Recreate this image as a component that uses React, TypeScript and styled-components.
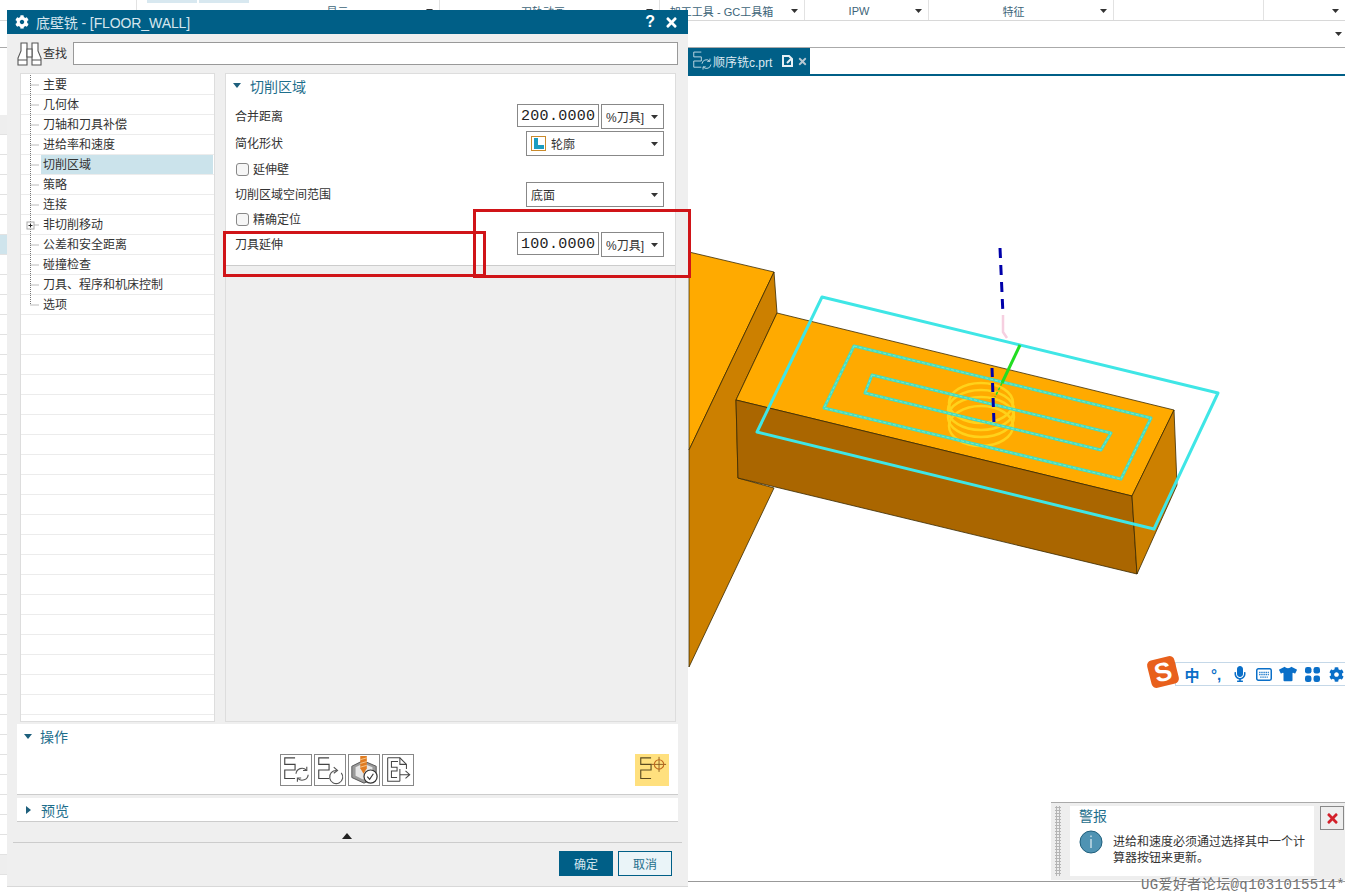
import styled, { createGlobalStyle } from "styled-components";
import { FaCog, FaMicrophone, FaTimes, FaTshirt } from "react-icons/fa";

const TEAL = "#005f87";
const CJK = `"Liberation Sans", "Noto Sans CJK SC", sans-serif`;

const GlobalStyle = createGlobalStyle`
  html, body {
    margin: 0;
    padding: 0;
    background: #fff;
  }
  body {
    font-family: ${CJK};
    font-size: 12px;
    color: #333;
  }
`;

const treeItems = [
  "主要",
  "几何体",
  "刀轴和刀具补偿",
  "进给率和速度",
  "切削区域",
  "策略",
  "连接",
  "非切削移动",
  "公差和安全距离",
  "碰撞检查",
  "刀具、程序和机床控制",
  "选项",
];

const ribbonSections = [
  { width: 137 },
  { width: 303, label: "显示", arrow: true, stubs: true },
  { width: 220, label: "刀轨动画", arrow: true },
  { width: 145, label: "加工工具 - GC工具箱", arrow: true, pad: 8 },
  { width: 124, label: "IPW", arrow: true, pad: 2 },
  { width: 185, label: "特征", arrow: true, pad: 2 },
  { width: 150 },
  { width: 81, arrow: true },
];

const SmallArrow = () => (
  <svg width="7" height="4" viewBox="0 0 7 4">
    <path d="M0 0h7L3.500 4z" fill="#333" />
  </svg>
);

const SeqGlyph = ({ color = "#444" }: { color?: string }) => (
  <path d="M15 3H4V10H15V16H4V25H15" fill="none" stroke={color} strokeWidth="1.2" />
);

const SyncArrows = ({ color = "#555" }: { color?: string }) => (
  <g fill="none" stroke={color} strokeWidth="1.2">
    <path d="M16 20a6.500 6.500 0 0 1 11-4" />
    <path d="M27.500 12.500v4h-4" />
    <path d="M29 21a6.500 6.500 0 0 1-11 4" />
    <path d="M17.500 28.500v-4h4" />
  </g>
);

const ToolbarIcon = ({ kind }: { kind: string }) => (
  <svg width="30" height="30" viewBox="0 0 32 32">
    {kind === "sync" && (
      <>
        <SeqGlyph />
        <SyncArrows />
      </>
    )}
    {kind === "replay" && (
      <>
        <SeqGlyph />
        <g fill="none" stroke="#555" strokeWidth="1.2">
          <path d="M28 19a7 7 0 1 1-5-2.500" />
          <path d="M20 13l4 3.500-4 3" />
        </g>
      </>
    )}
    {kind === "verify" && (
      <>
        <path d="M3 12L15 6l14 6v12l-13 6-13-6z" fill="#9a9a9a" stroke="#555" />
        <path d="M7 13l8-4 10 4v9l-10 4-8-4z" fill="#e6e6e6" />
        <path d="M12 1h7v13l-3.500 6L12 14z" fill="#e07b20" />
        <path d="M12 5l7-2M12 9l7-2M12 13l7-2" stroke="#f4c890" strokeWidth="1" />
        <circle cx="23" cy="23" r="7" fill="#fff" stroke="#333" strokeWidth="1.3" />
        <path d="M19.500 23l2.500 3 4-6" fill="none" stroke="#333" strokeWidth="1.2" />
      </>
    )}
    {kind === "export" && (
      <g fill="none" stroke="#444" strokeWidth="1.1">
        <path d="M5 3h13l7 7v5M5 3v25h13" />
        <path d="M18 3v7h7" />
        <path d="M16 7H9v6h6v4H9v7h6" />
        <path d="M18 21h10M24 17l4.500 4-4.500 4" />
        <path d="M18 15v13" />
      </g>
    )}
    {kind === "target" && (
      <>
        <SeqGlyph color="#5a4a20" />
        <path d="M15 10h16M23.500 2v16" stroke="#8a5a20" strokeWidth="1" />
        <circle cx="23.500" cy="10" r="5" fill="none" stroke="#c06a20" strokeWidth="1.2" />
      </>
    )}
  </svg>
);

const TreeConnector = ({ last, plus }: { last: boolean; plus: boolean }) => (
  <svg width="20" height="20" viewBox="0 0 20 20">
    <path
      d={last ? "M9.500 0V10M9.500 10H18" : "M9.500 0V20M9.500 10H18"}
      stroke="#777"
      strokeDasharray="1 1"
      fill="none"
    />
    {plus && (
      <>
        <rect x="6" y="7" width="7" height="7" fill="#fff" stroke="#aaa" />
        <path d="M7.500 10.500h4M9.500 8.500v4" stroke="#222" />
      </>
    )}
  </svg>
);

const Binoculars = () => (
  <svg width="25" height="24" viewBox="0 0 25 24">
    <g fill="#fff" stroke="#555" strokeWidth="1.1">
      <path d="M1 23v-7l3-7V1h6v22z" />
      <path d="M24 23v-7l-3-7V1h-6v22z" />
      <path d="M10 7h5v8h-5z" />
      <path d="M1 18h9M15 18h9" />
    </g>
  </svg>
);

const ContourIcon = () => (
  <svg width="15" height="15" viewBox="0 0 15 15">
    <rect x="0.500" y="0.500" width="14" height="14" fill="#fff" stroke="#c98a2c" />
    <path d="M3 2h4v7h6v4H3z" fill="#1b9cc0" />
  </svg>
);

const Scene = () => (
  <svg width="657" height="805" viewBox="688 76 657 805">
    <g stroke="#3a2a00" strokeWidth="0.8" strokeLinejoin="round">
      <path d="M689 252L774 272L689 450z" fill="#ffaa00" />
      <path d="M774 272L777 313L736 400L738 478L774 488L689 667V450z" fill="#cc8000" />
      <path d="M777 313L1174 410L1132 496L736 400z" fill="#ffaa00" />
      <path d="M736 400L1132 496L1137 574L738 478z" fill="#aa6600" />
      <path d="M1174 410L1177 485L1137 574L1132 496z" fill="#cc8000" />
    </g>
    <g fill="none" stroke="#ffd21a" strokeWidth="2.500">
      <ellipse cx="981" cy="403" rx="32" ry="20" />
      <ellipse cx="981" cy="410" rx="33" ry="20" />
      <ellipse cx="981" cy="417" rx="33" ry="20" />
      <ellipse cx="981" cy="426" rx="32" ry="20" />
    </g>
    <g fill="none" strokeLinejoin="round">
      <path d="M822 297L1218 393L1154 529L757 432z" stroke="#3fe6e6" strokeWidth="3" />
      <path d="M854 346L1151 418L1121 479L824 408z" stroke="#45dcc0" strokeWidth="3" />
      <path d="M872 375L1111 433L1101 450L865 393z" stroke="#45dcc0" strokeWidth="3" />
      <path d="M854 346L1151 418L1121 479L824 408z" stroke="#9ff0c8" strokeWidth="0.6" strokeDasharray="3 2" />
      <path d="M872 375L1111 433L1101 450L865 393z" stroke="#9ff0c8" strokeWidth="0.6" strokeDasharray="3 2" />
    </g>
    <path d="M1000 248L1003 315" stroke="#0000aa" strokeWidth="3" strokeDasharray="10 7" />
    <path d="M1003 315V332L1007 338" stroke="#f6cfe0" strokeWidth="2.500" fill="none" />
    <path d="M1020 345L1002 383" stroke="#22dd22" strokeWidth="3" />
    <path d="M1002 383L995 397" stroke="#22dd22" strokeWidth="1.500" strokeDasharray="3 2" />
    <path d="M992 368L994 424" stroke="#0000aa" strokeWidth="3" strokeDasharray="9 6" />
  </svg>
);

export default function App() {
  return (
    <Page>
      <GlobalStyle />

      <Ribbon>
        {ribbonSections.map((s, i) => (
          <RibbonSection key={i} $width={s.width}>
            {s.stubs && <RibbonStubs />}
            <RibbonLabel $pad={s.pad ?? 0}>{s.label}</RibbonLabel>
            {s.arrow && <SmallArrow />}
          </RibbonSection>
        ))}
      </Ribbon>
      <SubRibbon>
        <SmallArrow />
      </SubRibbon>

      <Main>
        <LeftPane>
          <StripSpacer />
          <StripRow $kind="gray" />
          {Array.from({ length: 5 }).map((_, i) => (
            <StripRow key={i} $kind="plain" />
          ))}
          <StripRow $kind="blue" />
          {Array.from({ length: 30 }).map((_, i) => (
            <StripRow key={i} $kind="plain" />
          ))}
          <StripRow $kind="gray" />
        </LeftPane>

        <Workspace>
          <TabBar>
            <Tab>
              <svg width="22" height="22" viewBox="0 0 32 32">
                <SeqGlyph color="#dceaf2" />
                <SyncArrows color="#dceaf2" />
              </svg>
              <TabName>顺序铣c.prt</TabName>
              <svg width="12" height="12" viewBox="0 0 12 12">
                <path d="M1 1h6l3 3v7H1z" fill="none" stroke="#e6f0f5" strokeWidth="2" />
                <path d="M5 8l4-4" stroke="#e6f0f5" strokeWidth="2" />
              </svg>
              <TabClose>
                <FaTimes size={11} color="#b6c8d2" />
              </TabClose>
            </Tab>
          </TabBar>

          <Viewport>
            <Scene />
            <StatusLine />

            <Sogou>
              <SogouLogo>S</SogouLogo>
              <SogouBar>
                <SogouItem $bold>中</SogouItem>
                <SogouItem $bold>°,</SogouItem>
                <SogouItem>
                  <FaMicrophone size={16} />
                </SogouItem>
                <SogouItem>
                  <svg width="16" height="13" viewBox="0 0 15 12">
                    <rect x="0.700" y="0.700" width="13.600" height="10.600" rx="1.500" fill="none" stroke="currentColor" strokeWidth="1.400" />
                    <path d="M3 4h9M3 6h9M4 8.500h7" stroke="currentColor" strokeWidth="1.200" strokeDasharray="1.200 0.800" />
                  </svg>
                </SogouItem>
                <SogouItem>
                  <FaTshirt size={18} />
                </SogouItem>
                <SogouItem>
                  <svg width="15" height="15" viewBox="0 0 13 13" fill="currentColor">
                    <rect x="0" y="0" width="5.600" height="5.600" rx="2" />
                    <rect x="7.400" y="0" width="5.600" height="5.600" rx="2" />
                    <rect x="0" y="7.400" width="5.600" height="5.600" rx="2" />
                    <rect x="7.400" y="7.400" width="5.600" height="5.600" rx="2" />
                  </svg>
                </SogouItem>
                <SogouItem>
                  <FaCog size={15} />
                </SogouItem>
              </SogouBar>
            </Sogou>

            <AlertPanel>
              <AlertGrip />
              <AlertCard>
                <AlertTitle>警报</AlertTitle>
                <AlertBody>
                  <svg width="24" height="24" viewBox="0 0 24 24">
                    <circle cx="12" cy="12" r="11" fill="#4f93b3" stroke="#1f5f7c" />
                    <path d="M12 9v9M12 5.500v1.600" stroke="#fff" strokeWidth="1" />
                  </svg>
                  <AlertText>进给和速度必须通过选择其中一个计算器按钮来更新。</AlertText>
                </AlertBody>
              </AlertCard>
              <AlertClose>
                <FaTimes size={15} color="#d3202a" />
              </AlertClose>
            </AlertPanel>

            <Watermark>UG爱好者论坛@q1031015514*</Watermark>
          </Viewport>
        </Workspace>
      </Main>

      <Dialog>
        <TitleBar>
          <FaCog size={14} color="#fff" />
          <TitleText>底壁铣 - [FLOOR_WALL]</TitleText>
          <TitleHelp>?</TitleHelp>
          <FaTimes size={15} color="#fff" />
        </TitleBar>

        <SearchRow>
          <Binoculars />
          <SearchLabel>查找</SearchLabel>
          <SearchInput readOnly value="" />
        </SearchRow>

        <Body>
          <Tree>
            {treeItems.map((name, i) => (
              <TreeRow key={name}>
                <TreeConnector last={i === treeItems.length - 1} plus={name === "非切削移动"} />
                <TreeLabel $selected={name === "切削区域"}>{name}</TreeLabel>
              </TreeRow>
            ))}
            {Array.from({ length: 20 }).map((_, i) => (
              <TreeRow key={i} />
            ))}
          </Tree>

          <SettingsPanel>
            <Section>
              <SectionHeader>
                <TriangleDown />
                切削区域
              </SectionHeader>
              <Row $h={27}>
                <RowLabel>合并距离</RowLabel>
                <NumberBox>200.0000</NumberBox>
                <Dropdown $width={63}>
                  <DropdownText>%刀具]</DropdownText>
                  <SmallArrow />
                </Dropdown>
              </Row>
              <Row $h={26}>
                <RowLabel>简化形状</RowLabel>
                <Dropdown $width={138}>
                  <ContourIcon />
                  <DropdownText>轮廓</DropdownText>
                  <SmallArrow />
                </Dropdown>
              </Row>
              <Row $h={25}>
                <CheckBox />
                <CheckLabel>延伸壁</CheckLabel>
              </Row>
              <Row $h={25}>
                <RowLabel>切削区域空间范围</RowLabel>
                <Dropdown $width={138}>
                  <DropdownText>底面</DropdownText>
                  <SmallArrow />
                </Dropdown>
              </Row>
              <Row $h={25}>
                <CheckBox />
                <CheckLabel>精确定位</CheckLabel>
              </Row>
              <Row $h={32}>
                <RowLabel>刀具延伸</RowLabel>
                <NumberBox>100.0000</NumberBox>
                <Dropdown $width={63}>
                  <DropdownText>%刀具]</DropdownText>
                  <SmallArrow />
                </Dropdown>
              </Row>
            </Section>
          </SettingsPanel>
        </Body>

        <OpsBlock>
          <BlockHeader>
            <TriangleDown />
            操作
          </BlockHeader>
          <OpsIcons>
            <ToolButton>
              <ToolbarIcon kind="sync" />
            </ToolButton>
            <ToolButton>
              <ToolbarIcon kind="replay" />
            </ToolButton>
            <ToolButton>
              <ToolbarIcon kind="verify" />
            </ToolButton>
            <ToolButton>
              <ToolbarIcon kind="export" />
            </ToolButton>
            <HighlightButton>
              <ToolbarIcon kind="target" />
            </HighlightButton>
          </OpsIcons>
        </OpsBlock>

        <PreviewBlock>
          <BlockHeader>
            <TriangleRight />
            预览
          </BlockHeader>
        </PreviewBlock>

        <Collapse>
          <svg width="10" height="6" viewBox="0 0 10 6">
            <path d="M0 6L5 0l5 6z" fill="#222" />
          </svg>
        </Collapse>

        <Footer>
          <PrimaryButton>确定</PrimaryButton>
          <SecondaryButton>取消</SecondaryButton>
        </Footer>
      </Dialog>

      <AnnotationLabel />
      <AnnotationValue />
    </Page>
  );
}

const Page = styled.div`
  position: relative;
  width: 1345px;
  height: 895px;
  overflow: hidden;
  background: #fff;
  display: flex;
  flex-direction: column;
`;

const Ribbon = styled.div`
  display: flex;
  height: 20px;
  border-bottom: 1px solid #d8d8d8;
  flex-shrink: 0;
`;

const RibbonSection = styled.div<{ $width: number }>`
  width: ${(p) => p.$width}px;
  height: 20px;
  box-sizing: border-box;
  padding: 2px 6px 0 0;
  display: flex;
  align-items: center;
  border-right: 1px solid #e2e2e2;
  &:last-child {
    border-right: 0;
  }
`;

const RibbonStubs = styled.div`
  width: 102px;
  height: 3px;
  margin: -2px 0 0 10px;
  align-self: flex-start;
  background: linear-gradient(90deg, #d8e8f0 49%, #fff 49%, #fff 51%, #d8e8f0 51%);
`;

const RibbonLabel = styled.div<{ $pad: number }>`
  flex: 1;
  padding-right: ${(p) => p.$pad}px;
  text-align: center;
  font-size: 11px;
  color: #3d6478;
  white-space: nowrap;
`;

const SubRibbon = styled.div`
  height: 27px;
  padding-right: 3px;
  box-sizing: border-box;
  display: flex;
  align-items: center;
  justify-content: flex-end;
  border-bottom: 1px solid #aaa;
  flex-shrink: 0;
`;

const Main = styled.div`
  flex: 1;
  display: flex;
  min-height: 0;
`;

const LeftPane = styled.div`
  width: 688px;
  flex-shrink: 0;
  background: #fff;
`;

const StripSpacer = styled.div`
  height: 67px;
`;

const StripRow = styled.div<{ $kind: "plain" | "gray" | "blue" }>`
  height: 20px;
  box-sizing: border-box;
  border-bottom: 1px solid #e2e2e2;
  background: ${(p) => (p.$kind === "gray" ? "#eee" : p.$kind === "blue" ? "#cfe4ec" : "#fff")};
`;

const Workspace = styled.div`
  flex: 1;
  display: flex;
  flex-direction: column;
  min-width: 0;
`;

const TabBar = styled.div`
  height: 26px;
  flex-shrink: 0;
  display: flex;
  border-bottom: 2px solid ${TEAL};
`;

const Tab = styled.div`
  width: 122px;
  box-sizing: border-box;
  padding-left: 3px;
  display: flex;
  align-items: center;
  background: ${TEAL};
`;

const TabName = styled.span`
  font-size: 12px;
  color: #dceaf2;
  width: 66px;
  margin-right: 3px;
  white-space: nowrap;
`;

const TabClose = styled.span`
  display: flex;
  margin-left: 3px;
`;

const Viewport = styled.div`
  position: relative;
  flex: 1;
  svg {
    display: block;
  }
`;

const StatusLine = styled.div`
  border-top: 1px solid #999;
`;

const Sogou = styled.div`
  position: absolute;
  left: 459px;
  top: 581px;
  right: 0;
  display: flex;
  align-items: flex-start;
`;

const SogouLogo = styled.div`
  position: relative;
  z-index: 1;
  width: 28px;
  height: 28px;
  margin: 1px 0 1px 2px;
  flex-shrink: 0;
  border-radius: 5px;
  background: #e8601c;
  transform: rotate(-14deg);
  text-align: center;
  font: 900 26px/28px "Liberation Sans", sans-serif;
  color: #fff;
`;

const SogouBar = styled.div`
  margin: 5px 0 0 -2px;
  flex: 1;
  min-width: 0;
  height: 24px;
  box-sizing: border-box;
  display: flex;
  align-items: center;
  overflow: hidden;
  padding-left: 4px;
  border: 1px solid #c5d8e8;
  border-right: 0;
  color: #0a6fc8;
`;

const SogouItem = styled.span<{ $bold?: boolean }>`
  width: 24px;
  flex-shrink: 0;
  display: flex;
  justify-content: center;
  font-size: 15px;
  font-weight: ${(p) => (p.$bold ? 700 : 400)};
`;

const AlertPanel = styled.div`
  position: absolute;
  left: 363px;
  top: 726px;
  right: 0;
  height: 78px;
  box-sizing: border-box;
  padding: 3px 1px 3px 4px;
  display: flex;
  align-items: flex-start;
  background: #eee;
  border-top: 1px solid #aaa;
`;

const AlertGrip = styled.div`
  width: 6px;
  height: 70px;
  margin-right: 9px;
  background-image: radial-gradient(#b5b5b5 1px, transparent 1.200px);
  background-size: 3px 3px;
`;

const AlertCard = styled.div`
  width: 244px;
  height: 70px;
  box-sizing: border-box;
  padding: 2px 8px 0 9px;
  background: #fff;
`;

const AlertTitle = styled.div`
  font-size: 14px;
  line-height: 17px;
  color: #1e6e8c;
`;

const AlertBody = styled.div`
  display: flex;
  gap: 10px;
  margin-top: 5px;
  svg {
    flex-shrink: 0;
  }
`;

const AlertText = styled.div`
  width: 196px;
  font-size: 12px;
  line-height: 16px;
  color: #333;
  margin-top: 4px;
`;

const AlertClose = styled.div`
  width: 24px;
  height: 24px;
  margin-left: 6px;
  box-sizing: border-box;
  border: 1px solid #888;
  display: flex;
  align-items: center;
  justify-content: center;
`;

const Watermark = styled.div`
  position: absolute;
  right: 0;
  bottom: 3px;
  font-family: "Liberation Mono", "Noto Sans CJK SC", monospace;
  font-size: 14px;
  line-height: 14px;
  letter-spacing: 0.400px;
  color: #707070;
  white-space: nowrap;
  text-shadow: 0 0 2px #fff;
`;

const Dialog = styled.div`
  position: absolute;
  left: 7px;
  top: 10px;
  width: 681px;
  height: 877px;
  box-sizing: border-box;
  display: flex;
  flex-direction: column;
  background: #efefef;
  border-bottom: 1px solid #d8d8d8;
`;

const TitleBar = styled.div`
  height: 24px;
  padding: 0 9px 0 8px;
  flex-shrink: 0;
  display: flex;
  align-items: center;
  background: ${TEAL};
`;

const TitleText = styled.div`
  flex: 1;
  margin-left: 7px;
  font-size: 14px;
  letter-spacing: -0.100px;
  color: #d6e6ee;
`;

const TitleHelp = styled.div`
  margin-right: 9px;
  font-size: 16px;
  font-weight: 700;
  color: #fff;
`;

const SearchRow = styled.div`
  height: 23px;
  margin: 8px 10px 8px 10px;
  flex-shrink: 0;
  display: flex;
  align-items: center;
`;

const SearchLabel = styled.div`
  width: 30px;
  margin-left: 1px;
  padding-bottom: 2px;
  font-size: 12px;
  color: #333;
`;

const SearchInput = styled.input`
  flex: 1;
  height: 23px;
  padding: 0;
  box-sizing: border-box;
  border: 1px solid #999;
  background: #fff;
`;

const Body = styled.div`
  height: 649px;
  padding: 0 12px 0 13px;
  flex-shrink: 0;
  display: flex;
  gap: 10px;
`;

const Tree = styled.div`
  width: 195px;
  box-sizing: border-box;
  padding-top: 1px;
  overflow: hidden;
  background: #fff;
  border: 1px solid #ddd;
`;

const TreeRow = styled.div`
  height: 20px;
  box-sizing: border-box;
  display: flex;
  border-bottom: 1px solid #ececec;
  svg {
    flex-shrink: 0;
  }
`;

const TreeLabel = styled.div<{ $selected?: boolean }>`
  flex: 1;
  margin-right: 1px;
  padding: 1px 0 0 2px;
  font-size: 12px;
  line-height: 19px;
  color: #333;
  background: ${(p) => (p.$selected ? "#cbe3eb" : "transparent")};
`;

const SettingsPanel = styled.div`
  flex: 1;
  box-sizing: border-box;
  background: #efefef;
  border: 1px solid #ddd;
`;

const Section = styled.div`
  height: 192px;
  box-sizing: border-box;
  padding: 0 11px 0 9px;
  background: #fff;
  border-bottom: 1px solid #ccc;
`;

const SectionHeader = styled.div`
  height: 30px;
  box-sizing: border-box;
  padding-bottom: 7px;
  display: flex;
  align-items: center;
  gap: 9px;
  margin-left: -2px;
  font-size: 14px;
  color: #1e6e8c;
`;

const TriangleDown = styled.span`
  width: 0;
  height: 0;
  border-left: 4.500px solid transparent;
  border-right: 4.500px solid transparent;
  border-top: 5px solid #1d5f7c;
`;

const TriangleRight = styled.span`
  width: 0;
  height: 0;
  margin: 0 2px;
  border-top: 4.500px solid transparent;
  border-bottom: 4.500px solid transparent;
  border-left: 5px solid #1d5f7c;
`;

const Row = styled.div<{ $h: number }>`
  height: ${(p) => p.$h}px;
  display: flex;
  align-items: flex-start;
  gap: 2px;
`;

const RowLabel = styled.div`
  flex: 1;
  font-size: 12px;
  line-height: 26px;
  color: #333;
`;

const NumberBox = styled.div`
  width: 82px;
  height: 23px;
  box-sizing: border-box;
  padding-left: 3px;
  overflow: hidden;
  border: 1px solid #888;
  background: #fff;
  font-family: "Liberation Mono", monospace;
  font-size: 15px;
  line-height: 24px;
  letter-spacing: 0.300px;
  color: #222;
  white-space: nowrap;
`;

const Dropdown = styled.div<{ $width: number }>`
  width: ${(p) => p.$width}px;
  height: 25px;
  box-sizing: border-box;
  padding: 0 5px 0 4px;
  display: flex;
  align-items: center;
  gap: 5px;
  border: 1px solid #888;
  background: #fff;
`;

const DropdownText = styled.div`
  flex: 1;
  overflow: hidden;
  font-size: 12px;
  color: #333;
  white-space: nowrap;
`;

const CheckBox = styled.span`
  width: 13px;
  height: 13px;
  margin: 6px 2px 0 1px;
  box-sizing: border-box;
  border: 1px solid #888;
  border-radius: 3px;
  background: #f6f6f6;
`;

const CheckLabel = styled.div`
  font-size: 12px;
  line-height: 26px;
  color: #333;
`;

const OpsBlock = styled.div`
  height: 71px;
  margin: 2px 10px 0;
  flex-shrink: 0;
  box-sizing: border-box;
  background: #fff;
  border-bottom: 1px solid #ccc;
`;

const BlockHeader = styled.div`
  height: 24px;
  padding-left: 7px;
  display: flex;
  align-items: center;
  gap: 8px;
  font-size: 14px;
  color: #1e6e8c;
`;

const OpsIcons = styled.div`
  margin-top: 6px;
  padding-left: 263px;
  display: flex;
  gap: 2px;
`;

const ToolButton = styled.div`
  width: 32px;
  height: 32px;
  box-sizing: border-box;
  display: flex;
  align-items: center;
  justify-content: center;
  border: 1px solid #888;
`;

const HighlightButton = styled.div`
  width: 34px;
  height: 32px;
  margin-left: auto;
  margin-right: 9px;
  display: flex;
  align-items: center;
  justify-content: center;
  background: #ffe07e;
`;

const PreviewBlock = styled.div`
  height: 24px;
  margin: 3px 10px 0;
  flex-shrink: 0;
  box-sizing: border-box;
  background: #fff;
  border-bottom: 1px solid #ccc;
`;

const Collapse = styled.div`
  height: 21px;
  flex-shrink: 0;
  margin: 0 6px;
  padding: 11px 2px 0 0;
  box-sizing: border-box;
  display: flex;
  align-items: flex-start;
  justify-content: center;
  border-bottom: 1px solid #ccc;
`;

const Footer = styled.div`
  flex: 1;
  padding: 8px 16px 0 0;
  display: flex;
  justify-content: flex-end;
  align-items: flex-start;
  gap: 5px;
`;

const PrimaryButton = styled.div`
  width: 54px;
  height: 25px;
  display: flex;
  align-items: center;
  justify-content: center;
  background: ${TEAL};
  font-size: 12px;
  color: #d6e8f0;
`;

const SecondaryButton = styled(PrimaryButton)`
  box-sizing: border-box;
  background: #eaf4f8;
  border: 1px solid ${TEAL};
  color: #1e6e8c;
`;

const AnnotationLabel = styled.div`
  position: absolute;
  left: 223px;
  top: 231px;
  width: 263px;
  height: 46px;
  box-sizing: border-box;
  border: 3px solid #d01418;
`;

const AnnotationValue = styled.div`
  position: absolute;
  left: 473px;
  top: 209px;
  width: 218px;
  height: 69px;
  box-sizing: border-box;
  border: 3px solid #d01418;
`;
